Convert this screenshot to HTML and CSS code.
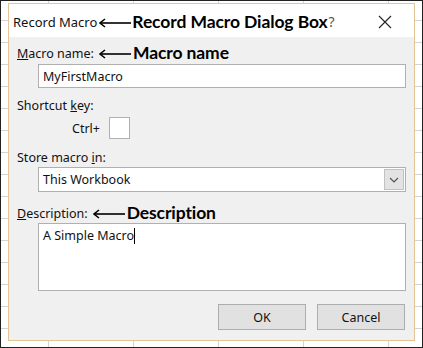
FILE: index.html
```html
<!DOCTYPE html>
<html>
<head>
<meta charset="utf-8">
<link rel="stylesheet" href="styles.css">
</head>
<body>
<div class="frame">
  <div class="dialog">
    <div class="titlebar">
      <span class="title">Record Macro</span>
      <svg class="arrow" width="32" height="10" viewBox="0 0 32 10"><path d="M1 5H32" stroke="#000" stroke-width="1.6"/><path d="M6 1L1 5L6 9" stroke="#000" stroke-width="1.6" fill="none"/></svg>
      <span class="note">Record Macro Dialog Box</span>
      <span class="help">?</span>
      <svg class="close" width="14" height="14" viewBox="0 0 14 14"><path d="M1 1L13 13M13 1L1 13" stroke="#222" stroke-width="1.1"/></svg>
    </div>
    <div class="body">
      <div class="label-row first">
        <span class="label"><u>M</u>acro name:</span>
        <svg class="arrow" width="32" height="10" viewBox="0 0 32 10"><path d="M1 5H32" stroke="#000" stroke-width="1.6"/><path d="M6 1L1 5L6 9" stroke="#000" stroke-width="1.6" fill="none"/></svg>
        <span class="note">Macro name</span>
      </div>
      <div class="field input">MyFirstMacro</div>

      <div class="label-row shortcut"><span class="label">Shortcut <u>k</u>ey:</span></div>
      <div class="ctrl-row">
        <span class="label">Ctrl+</span>
        <span class="keybox"></span>
      </div>

      <div class="label-row store"><span class="label">Store macro <u>i</u>n:</span></div>
      <div class="field select">
        <span class="select-text">This Workbook</span>
        <span class="drop"><svg width="10" height="6" viewBox="0 0 10 6"><path d="M1 1L5 5L9 1" stroke="#555" stroke-width="1.2" fill="none"/></svg></span>
      </div>

      <div class="label-row desc">
        <span class="label"><u>D</u>escription:</span>
        <svg class="arrow" width="32" height="10" viewBox="0 0 32 10"><path d="M1 5H32" stroke="#000" stroke-width="1.6"/><path d="M6 1L1 5L6 9" stroke="#000" stroke-width="1.6" fill="none"/></svg>
        <span class="note">Description</span>
      </div>
      <div class="field textarea"><span>A Simple Macro</span><span class="caret"></span></div>

      <div class="buttons">
        <div class="btn">OK</div>
        <div class="btn">Cancel</div>
      </div>
    </div>
  </div>
</div>
</body>
</html>
```

FILE: styles.css
```css
html, body {
  margin: 0;
  padding: 0;
  background: #fff;
}
.frame {
  width: 423px;
  height: 348px;
  box-sizing: border-box;
  border: 1px solid #222;
  background-color: #fff;
  background-image:
    repeating-linear-gradient(to bottom, transparent 0, transparent 21px, #d4d4d4 21px, #d4d4d4 22px),
    repeating-linear-gradient(to right, transparent 0, transparent 47px, #d4d4d4 47px, #d4d4d4 48px, transparent 48px, transparent 85px);
  background-position: 0 -2px, 0 0;
  padding: 2px 0 0 7px;
  font-family: "Noto Sans", "Open Sans", sans-serif;
  color: #111;
}
.dialog {
  width: 407px;
  height: 338px;
  box-sizing: border-box;
  border: 1px solid #e2c497;
  background: #f0f0f0;
  display: flex;
  flex-direction: column;
}
.titlebar {
  height: 33px;
  background: #fff;
  display: flex;
  align-items: center;
  padding: 0 0 0 4px;
  flex-shrink: 0;
}
.title {
  font-size: 13px;
  color: #111;
  padding-top: 3px;
}
.titlebar .arrow {
  margin: 4px 1px 0 2px;
}
.note {
  font-family: "Lato", "Noto Sans", sans-serif;
  font-weight: 700;
  font-size: 17.5px;
  color: #000;
  letter-spacing: -0.1px;
}
.titlebar .note {
  padding-top: 2px;
}
.help {
  font-size: 14px;
  color: #555;
  margin-left: 1px;
  padding-top: 2px;
}
.close {
  margin-left: 43px;
  margin-top: 2px;
}
.body {
  display: flex;
  flex-direction: column;
  padding: 0 8px 0 8px;
}
.label-row {
  display: flex;
  align-items: center;
  height: 18px;
  margin-top: 10px;
}
.label-row.first {
  margin-top: 7px;
}
.label-row.shortcut {
  margin-top: 8px;
}
.label-row.store {
  margin-top: 9px;
}
.label-row.desc {
  margin-top: 12px;
}
.label {
  font-size: 12.5px;
  color: #111;
}
.label-row .arrow {
  margin: 1px 2px 0 5px;
}
.label-row .note {
  line-height: 18px;
}
.field {
  margin-left: 21px;
  width: 368px;
  box-sizing: border-box;
  background: #fff;
  border: 1px solid #b0b0b0;
  font-size: 12.5px;
  display: flex;
  align-items: center;
  padding-left: 4px;
}
.input {
  height: 24px;
  margin-top: 2px;
}
.ctrl-row {
  display: flex;
  align-items: center;
  margin-top: 3px;
  height: 22px;
  padding-left: 55px;
}
.keybox {
  width: 21px;
  height: 22px;
  box-sizing: border-box;
  background: #fff;
  border: 1px solid #b0b0b0;
  margin-left: 9px;
}
.select {
  height: 25px;
  margin-top: 1px;
  padding-right: 1px;
  justify-content: space-between;
}
.drop {
  width: 20px;
  height: 21px;
  box-sizing: border-box;
  background: #e3e3e3;
  border: 1px solid #c2c2c2;
  display: flex;
  align-items: center;
  justify-content: center;
}
.textarea {
  height: 68px;
  margin-top: 1px;
  align-items: flex-start;
  padding-top: 3px;
}
.caret {
  display: inline-block;
  width: 1px;
  height: 16px;
  background: #000;
  margin-top: 1px;
}
.buttons {
  display: flex;
  justify-content: flex-end;
  gap: 11px;
  margin-top: 13px;
  padding-right: 1px;
}
.btn {
  width: 88px;
  height: 26px;
  box-sizing: border-box;
  background: #e1e1e1;
  border: 1px solid #adadad;
  font-size: 12.5px;
  display: flex;
  align-items: center;
  justify-content: center;
}
```
